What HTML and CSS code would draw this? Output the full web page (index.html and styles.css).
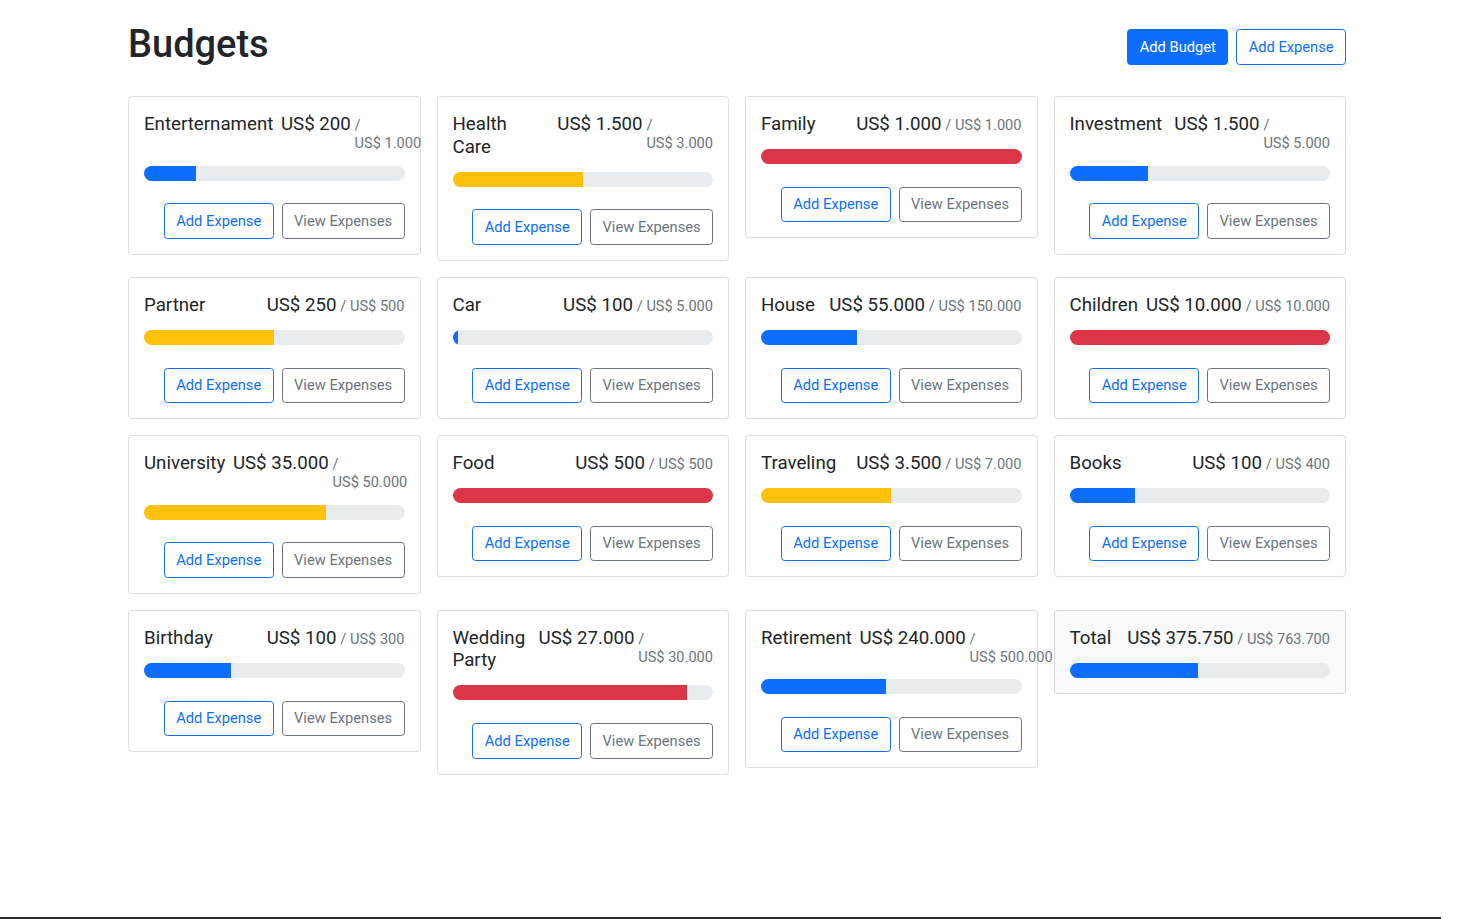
FILE: index.html
```html
<!DOCTYPE html>
<html lang="en">
<head>
<meta charset="utf-8">
<title>Budgets</title>
<link rel="stylesheet" href="styles.css">
</head>
<body>
<div class="container">
  <header class="page-header">
    <h1 class="page-title">Budgets</h1>
    <button class="btn btn-primary">Add Budget</button>
    <button class="btn btn-outline-primary">Add Expense</button>
  </header>

  <main class="budget-grid">
    <div class="card">
      <div class="card-title"><div class="name">Enterternament</div><div class="amount">US$ 200<span class="max">/<br>US$ 1.000</span></div></div>
      <div class="progress"><div class="bar bar-primary" style="width:20%"></div></div>
      <div class="actions"><button class="btn btn-outline-primary">Add Expense</button><button class="btn btn-outline-secondary">View Expenses</button></div>
    </div>

    <div class="card">
      <div class="card-title"><div class="name">Health<br>Care</div><div class="amount">US$ 1.500<span class="max">/<br>US$ 3.000</span></div></div>
      <div class="progress"><div class="bar bar-warning" style="width:50%"></div></div>
      <div class="actions"><button class="btn btn-outline-primary">Add Expense</button><button class="btn btn-outline-secondary">View Expenses</button></div>
    </div>

    <div class="card">
      <div class="card-title"><div class="name">Family</div><div class="amount">US$ 1.000<span class="max">/ US$ 1.000</span></div></div>
      <div class="progress"><div class="bar bar-danger" style="width:100%"></div></div>
      <div class="actions"><button class="btn btn-outline-primary">Add Expense</button><button class="btn btn-outline-secondary">View Expenses</button></div>
    </div>

    <div class="card">
      <div class="card-title"><div class="name">Investment</div><div class="amount">US$ 1.500<span class="max">/<br>US$ 5.000</span></div></div>
      <div class="progress"><div class="bar bar-primary" style="width:30%"></div></div>
      <div class="actions"><button class="btn btn-outline-primary">Add Expense</button><button class="btn btn-outline-secondary">View Expenses</button></div>
    </div>

    <div class="card">
      <div class="card-title"><div class="name">Partner</div><div class="amount">US$ 250<span class="max">/ US$ 500</span></div></div>
      <div class="progress"><div class="bar bar-warning" style="width:50%"></div></div>
      <div class="actions"><button class="btn btn-outline-primary">Add Expense</button><button class="btn btn-outline-secondary">View Expenses</button></div>
    </div>

    <div class="card">
      <div class="card-title"><div class="name">Car</div><div class="amount">US$ 100<span class="max">/ US$ 5.000</span></div></div>
      <div class="progress"><div class="bar bar-primary" style="width:2%"></div></div>
      <div class="actions"><button class="btn btn-outline-primary">Add Expense</button><button class="btn btn-outline-secondary">View Expenses</button></div>
    </div>

    <div class="card">
      <div class="card-title"><div class="name">House</div><div class="amount">US$ 55.000<span class="max">/ US$ 150.000</span></div></div>
      <div class="progress"><div class="bar bar-primary" style="width:36.67%"></div></div>
      <div class="actions"><button class="btn btn-outline-primary">Add Expense</button><button class="btn btn-outline-secondary">View Expenses</button></div>
    </div>

    <div class="card">
      <div class="card-title"><div class="name">Children</div><div class="amount">US$ 10.000<span class="max">/ US$ 10.000</span></div></div>
      <div class="progress"><div class="bar bar-danger" style="width:100%"></div></div>
      <div class="actions"><button class="btn btn-outline-primary">Add Expense</button><button class="btn btn-outline-secondary">View Expenses</button></div>
    </div>

    <div class="card">
      <div class="card-title"><div class="name">University</div><div class="amount">US$ 35.000<span class="max">/<br>US$ 50.000</span></div></div>
      <div class="progress"><div class="bar bar-warning" style="width:70%"></div></div>
      <div class="actions"><button class="btn btn-outline-primary">Add Expense</button><button class="btn btn-outline-secondary">View Expenses</button></div>
    </div>

    <div class="card">
      <div class="card-title"><div class="name">Food</div><div class="amount">US$ 500<span class="max">/ US$ 500</span></div></div>
      <div class="progress"><div class="bar bar-danger" style="width:100%"></div></div>
      <div class="actions"><button class="btn btn-outline-primary">Add Expense</button><button class="btn btn-outline-secondary">View Expenses</button></div>
    </div>

    <div class="card">
      <div class="card-title"><div class="name">Traveling</div><div class="amount">US$ 3.500<span class="max">/ US$ 7.000</span></div></div>
      <div class="progress"><div class="bar bar-warning" style="width:50%"></div></div>
      <div class="actions"><button class="btn btn-outline-primary">Add Expense</button><button class="btn btn-outline-secondary">View Expenses</button></div>
    </div>

    <div class="card">
      <div class="card-title"><div class="name">Books</div><div class="amount">US$ 100<span class="max">/ US$ 400</span></div></div>
      <div class="progress"><div class="bar bar-primary" style="width:25%"></div></div>
      <div class="actions"><button class="btn btn-outline-primary">Add Expense</button><button class="btn btn-outline-secondary">View Expenses</button></div>
    </div>

    <div class="card">
      <div class="card-title"><div class="name">Birthday</div><div class="amount">US$ 100<span class="max">/ US$ 300</span></div></div>
      <div class="progress"><div class="bar bar-primary" style="width:33.33%"></div></div>
      <div class="actions"><button class="btn btn-outline-primary">Add Expense</button><button class="btn btn-outline-secondary">View Expenses</button></div>
    </div>

    <div class="card">
      <div class="card-title"><div class="name">Wedding<br>Party</div><div class="amount">US$ 27.000<span class="max">/<br>US$ 30.000</span></div></div>
      <div class="progress"><div class="bar bar-danger" style="width:90%"></div></div>
      <div class="actions"><button class="btn btn-outline-primary">Add Expense</button><button class="btn btn-outline-secondary">View Expenses</button></div>
    </div>

    <div class="card">
      <div class="card-title"><div class="name">Retirement</div><div class="amount">US$ 240.000<span class="max">/<br>US$ 500.000</span></div></div>
      <div class="progress"><div class="bar bar-primary" style="width:48%"></div></div>
      <div class="actions"><button class="btn btn-outline-primary">Add Expense</button><button class="btn btn-outline-secondary">View Expenses</button></div>
    </div>

    <div class="card card-total">
      <div class="card-title"><div class="name">Total</div><div class="amount">US$ 375.750<span class="max">/ US$ 763.700</span></div></div>
      <div class="progress"><div class="bar bar-primary" style="width:49.2%"></div></div>
    </div>
  </main>
</div>
<div class="bottom-edge"></div>
</body>
</html>
```

FILE: styles.css
```css
* {
  box-sizing: border-box;
}

html, body {
  margin: 0;
  padding: 0;
  background: #ffffff;
}

body {
  font-family: Roboto, "Liberation Sans", Arial, sans-serif;
  font-size: 15.2px;
  line-height: 1.5;
  color: #212529;
}

.container {
  width: 1218px;
  margin-left: 128px;
}

.page-header {
  display: flex;
  align-items: center;
  gap: 8px;
  padding-top: 21px;
  margin-bottom: 23px;
}

.page-title {
  margin: 0 auto 6px 0;
  font-size: 38px;
  line-height: 46px;
  font-weight: 500;
  color: #212529;
}

.btn {
  display: inline-block;
  font-family: inherit;
  font-size: 14.7px;
  line-height: 22.8px;
  font-weight: 400;
  padding: 5.4px 11.4px;
  border: 1px solid transparent;
  border-radius: 3.6px;
  background: transparent;
  cursor: pointer;
  white-space: nowrap;
}

.btn-primary {
  background: #0d6efd;
  border-color: #0d6efd;
  color: #ffffff;
}

.btn-outline-primary {
  color: #0d6efd;
  border-color: #0d6efd;
  background: #ffffff;
}

.btn-outline-secondary {
  color: #6c757d;
  border-color: #6c757d;
  background: #ffffff;
}

.budget-grid {
  display: grid;
  grid-template-columns: repeat(4, minmax(0, 1fr));
  gap: 16px;
  align-items: start;
}

.card {
  min-width: 0;
  border: 1px solid rgba(0, 0, 0, 0.13);
  border-radius: 4px;
  background: #ffffff;
  padding: 15px;
}

.card-total {
  background: #f8f9fa;
}

.card-title {
  display: flex;
  justify-content: space-between;
  align-items: baseline;
  padding-top: 1px;
  font-size: 18.7px;
  line-height: 22.6px;
  font-weight: 400;
  margin-bottom: 13.5px;
}

.name {
  margin-right: 7.6px;
  white-space: nowrap;
}

.amount {
  display: flex;
  align-items: baseline;
  white-space: nowrap;
}

.max {
  margin-left: 3.8px;
  font-size: 14.6px;
  line-height: 18px;
  color: #6c757d;
  white-space: nowrap;
}

.progress {
  height: 15px;
  background: #e9ecef;
  border-radius: 50px;
  overflow: hidden;
  display: flex;
}

.bar {
  height: 100%;
}

.bar-primary {
  background: #0d6efd;
}

.bar-warning {
  background: #ffc107;
}

.bar-danger {
  background: #dc3545;
}

.actions {
  display: flex;
  justify-content: flex-end;
  gap: 8px;
  margin-top: 22.7px;
}

.actions .btn {
  line-height: 22.7px;
}

.bottom-edge {
  position: fixed;
  left: 0;
  bottom: 0;
  width: 1441px;
  height: 2px;
  background: #2b2b2b;
}
```
